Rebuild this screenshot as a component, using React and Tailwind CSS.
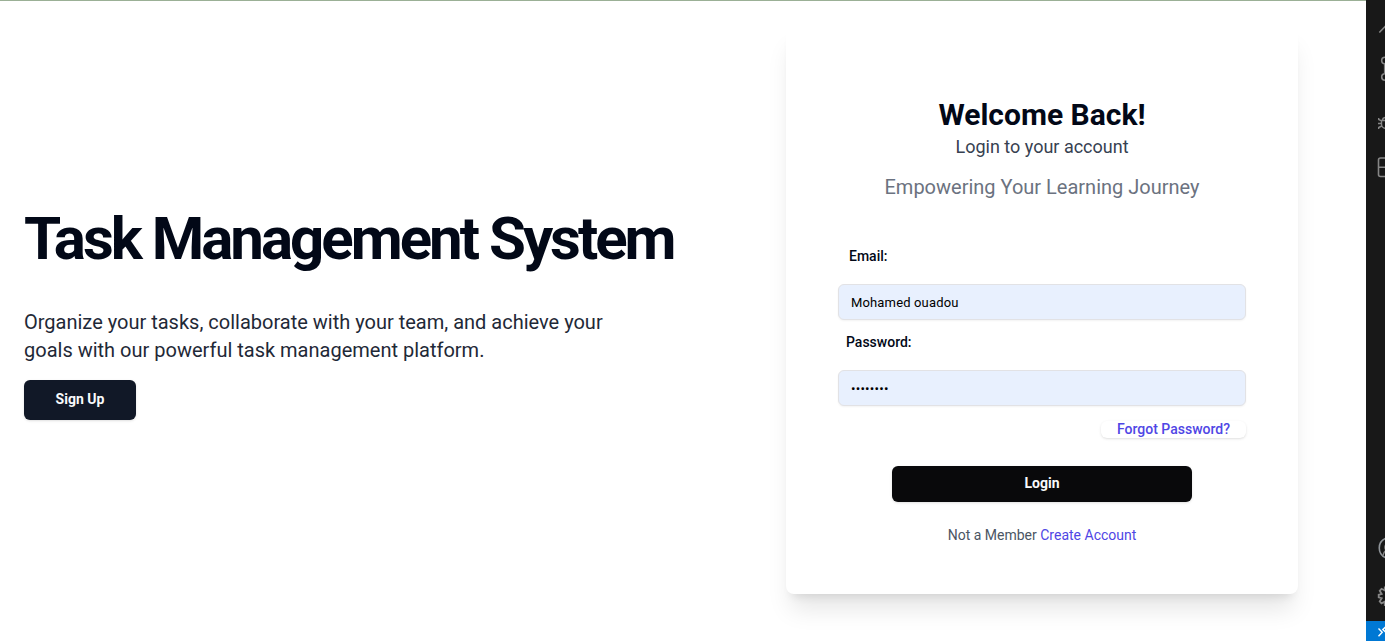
import React from "react";

function ActivityBar() {
  return (
    <aside className="flex w-[19px] shrink-0 flex-col overflow-hidden bg-[#181818]">
      <svg className="h-[200px] w-[19px] shrink-0" viewBox="0 0 19 200" fill="none" stroke="#868686" strokeWidth="1.6">
        <path d="M13.3 32.5 20 25.500" />
        <circle cx="19" cy="60.500" r="3.300" />
        <circle cx="19" cy="77" r="3.300" />
        <path d="M18.700 64v9.500" />
        <path strokeWidth="1.400" d="M20 128.300c-3 0-4.500-1.800-4.500-4.300v-3.500H20M16.500 120.500c0-2 1.500-3 3.500-3M12.700 118v1.500l2.800 1.300M12 123.500h3.500M12.700 129v-1.500l3-1.500" />
        <path d="M20 158h-5.500a2 2 0 0 0-2 2v14.500a2 2 0 0 0 2 2H20M12.500 167.300H20" />
      </svg>
      <div className="grow" />
      <svg className="h-[101px] w-[19px] shrink-0" viewBox="0 520 19 101" fill="none" stroke="#868686" strokeWidth="1.6">
        <path d="M20 538.200a10.500 10.500 0 0 0 0 19.600" stroke="#8f9499" />
        <path d="M21 543.500a4.500 4.500 0 0 0-1 6.500M20 550.500q-2.500 1.500-3 5" />
        <path strokeWidth="1.800" d="M20.500 587.500h-1.700v3l-3.300-1.700-1.800 2 2 3.200-3 .8v2.600l3 .8-2 3.200 1.800 2 3.300-1.700v3.300h1.700" />
      </svg>
      <div className="h-5 shrink-0 bg-[#0078d4]">
        <svg className="h-5 w-[19px]" viewBox="0 0 19 20" fill="none" stroke="#fff" strokeWidth="1.400">
          <path d="m12.500 7.500 3.700 3.700-3.700 4M20 5.500l-3.200 3L20 11.500" />
        </svg>
      </div>
    </aside>
  );
}

function Field({ id, label, labelClass, inputClass, type, value }) {
  return (
    <div className="flex flex-col">
      <label htmlFor={id} className={`flex h-[50px] items-center pb-1.5 text-sm font-medium ${labelClass}`}>
        {label}
      </label>
      <input
        id={id}
        type={type}
        defaultValue={value}
        className={`h-9 rounded-md border border-[#e2e2e5] bg-[#e8f0fe] px-3 text-black shadow-xs outline-none ${inputClass}`}
      />
    </div>
  );
}

export default function App() {
  return (
    <div className="flex h-[641px] w-[1385px] overflow-hidden bg-white font-['Roboto',sans-serif] text-[#020817]">
      <main className="flex min-w-0 grow items-start overflow-hidden border-t border-[#9bb096]">
        <section className="flex w-[762px] shrink-0 flex-col items-start pt-[208px] pl-6">
          <h1 className="text-6xl leading-[60px] font-bold tracking-tighter whitespace-nowrap">
            Task Management System
          </h1>
          <p className="mt-[39px] w-[600px] text-xl leading-7 text-[#1f2937]">
            Organize your tasks, collaborate with your team, and achieve your goals with our powerful task management
            platform.
          </p>
          <button className="mt-4 h-10 w-28 rounded-md bg-[#111827] pb-0.5 text-sm font-bold text-gray-50 shadow-sm">
            Sign Up
          </button>
        </section>
        <section className="mt-6 ml-6 flex h-[569px] w-[512px] shrink-0 flex-col rounded-lg bg-white px-[52px] pt-[72px] shadow-xl">
          <div className="flex flex-col items-center">
            <h2 className="text-3xl leading-9 font-bold">Welcome Back!</h2>
            <p className="text-lg leading-7 text-[#374151]">Login to your account</p>
            <p className="mt-3 text-xl leading-7 text-[#6b7280]">Empowering Your Learning Journey</p>
          </div>
          <form className="mt-[33px] flex flex-col" onSubmit={(e) => e.preventDefault()}>
            <Field
              id="email"
              label="Email:"
              labelClass="pl-[11px]"
              inputClass="text-[13px] tracking-[0.15px]"
              type="text"
              value="Mohamed ouadou"
            />
            <Field
              id="password"
              label="Password:"
              labelClass="pl-2"
              inputClass="text-[13.333px] tracking-[0.2px]"
              type="password"
              value="12345678"
            />
            <a className="mt-[15px] flex h-[17px] items-center self-end rounded-md px-4 pb-0.5 text-sm font-medium text-[#4f46e5] shadow-sm">
              Forgot Password?
            </a>
            <button className="mt-7 h-9 w-[300px] self-center rounded-md bg-[#09090b] pb-0.5 text-sm font-bold text-gray-50 shadow-sm">
              Login
            </button>
          </form>
          <p className="mt-[23px] text-center text-sm text-[#4b5563]">
            Not a Member <a className="text-[#4f46e5]">Create Account</a>
          </p>
        </section>
      </main>
      <ActivityBar />
    </div>
  );
}
